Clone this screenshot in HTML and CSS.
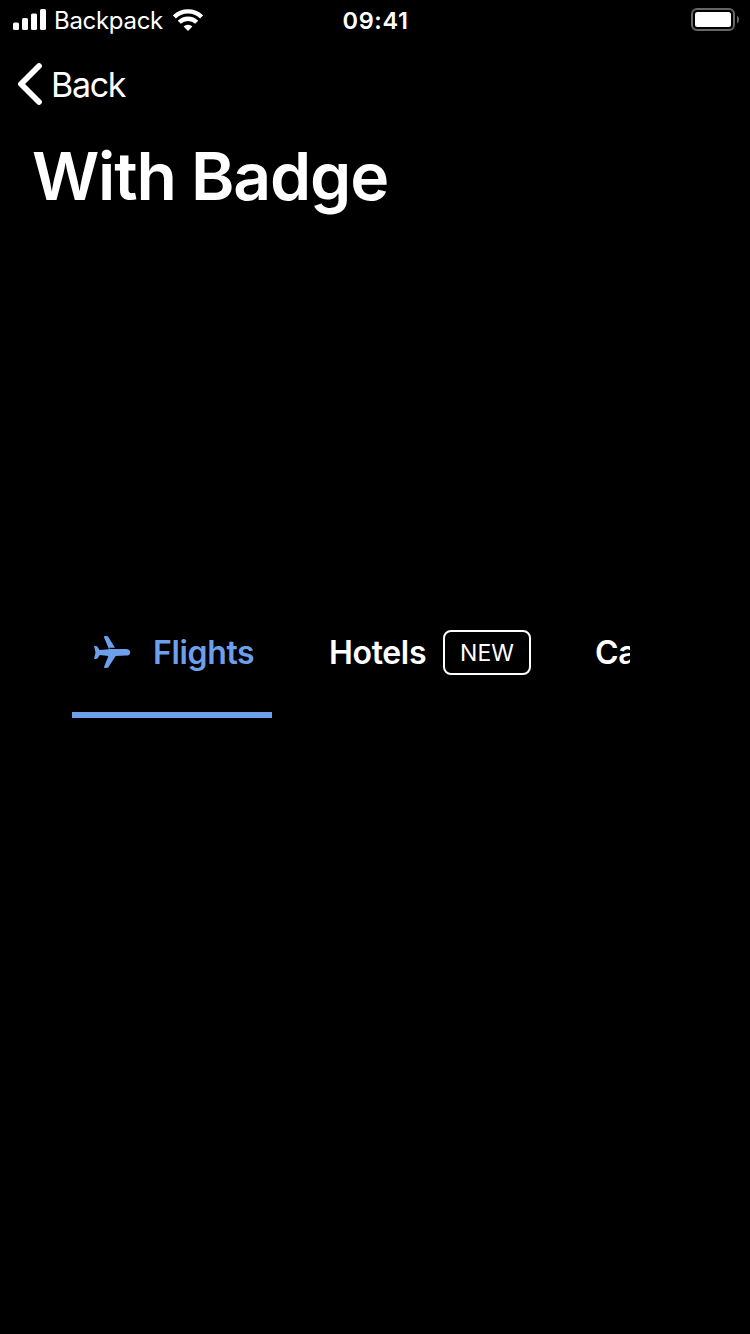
FILE: index.html
```html
<!DOCTYPE html>
<html lang="en">
<head>
<meta charset="utf-8">
<title>With Badge</title>
<link rel="stylesheet" href="styles.css">
</head>
<body>
<header class="status">
  <div class="carrier">
    <svg class="signal" width="34" height="22" viewBox="0 0 34 22" fill="#fff"><rect x="0" y="13.5" width="6" height="7.5" rx="1.5"/><rect x="9" y="9" width="6" height="12" rx="1.5"/><rect x="18" y="4.5" width="6" height="16.5" rx="1.5"/><rect x="27" y="0" width="6" height="21" rx="1.5"/></svg>
    <span class="carrier-name">Backpack</span>
    <svg class="wifi" width="30" height="22" viewBox="0 0 30 22"><g fill="none" stroke="#fff" stroke-width="4.4"><path d="M1.4 7.9a19.6 19.6 0 0 1 27.2 0"/><path d="M6.3 13.3a12.3 12.3 0 0 1 17.4 0"/></g><path d="M10.6 17.5a6.4 6.4 0 0 1 8.8 0L15 22z" fill="#fff"/></svg>
  </div>
  <span class="time">09:41</span>
  <svg class="battery" width="48" height="24" viewBox="0 0 48 24"><rect x="1" y="1" width="42" height="21" rx="5" fill="none" stroke="#666" stroke-width="2"/><rect x="4" y="4" width="36" height="15" rx="2.5" fill="#fff"/><path d="M46 7.5q2 1.2 2 4t-2 4z" fill="#666"/></svg>
</header>
<nav class="nav">
  <svg class="chevron" width="26" height="44" viewBox="0 0 26 44"><path d="M22 4 4 22l18 18" fill="none" stroke="#fff" stroke-width="5.8" stroke-linecap="round" stroke-linejoin="round"/></svg>
  <span class="back">Back</span>
</nav>
<h1 class="title">With Badge</h1>
<main class="tabs">
  <div class="tab tab-selected">
    <svg class="plane" width="38" height="34" viewBox="0 0 38 34"><path fill="#6d9feb" d="M0 10h2.1q.8 0 1.4.8L5.5 14l9.5-.8L10 1.2Q9.6 0 10.8 0h2q1 0 1.6.9L21 11.8h-5.5v1.3H32q4.2.4 4.2 3.3T32 19.6l-10.3.5-7.3 11.1q-.5.8-1.5.8h-2q-1.2 0-.8-1.2l4.3-10.8-8.6-1-2.3 3.3q-.5.7-1.4.7H0l1.5-6.5z"/></svg>
    <span class="label flights">Flights</span>
  </div>
  <div class="tab hotels-tab"><span class="label hotels">Hotels</span><span class="badge">NEW</span></div>
  <div class="tab cars-tab"><span class="label">Cars</span></div>
</main>
</body>
</html>
```
FILE: styles.css
```css
body {
  margin: 0;
  height: 1334px;
  overflow: hidden;
  background: #000;
  color: #fff;
  font-family: Inter, "Liberation Sans", sans-serif;
  white-space: nowrap;
}
svg { display: block; flex: none; }
.status {
  display: grid;
  grid-template-columns: 1fr auto 1fr;
  height: 40px;
  box-sizing: border-box;
  padding: 0 11px 0 13px;
  font-size: 24px;
  line-height: 42px;
}
.carrier { display: flex; }
.signal { margin-top: 9px; }
.carrier-name { width: 111px; margin-left: 7px; letter-spacing: -.3px; }
.wifi { margin-top: 9px; margin-left: 8px; }
.time { margin-right: 1px; font-weight: 600; font-size: 23.5px; letter-spacing: .6px; }
.battery { justify-self: end; margin-top: 8px; }
.nav {
  display: flex;
  align-items: center;
  height: 88px;
  padding-left: 17px;
}
.chevron { margin-right: 8px; }
.back { padding-top: 1px; font-size: 34px; line-height: 40px; letter-spacing: -1.3px; }
.title {
  margin: 0;
  padding: 8px 0 0 32px;
  font-size: 66px;
  line-height: 80px;
  font-weight: 600;
  letter-spacing: -1.2px;
}
.tabs {
  display: flex;
  width: 558px;
  height: 130px;
  margin: 372px 0 0 72px;
  overflow: hidden;
}
.tab {
  display: flex;
  flex: none;
  align-items: center;
  box-sizing: border-box;
  height: 130px;
  padding-bottom: 2px;
}
.tab-selected {
  width: 200px;
  padding: 4px 0 0 22px;
  border-bottom: 6px solid #6d9feb;
  color: #6d9feb;
}
.plane { margin-top: 2px; }
.label { padding-top: 1px; font-size: 32px; line-height: 40px; font-weight: 600; letter-spacing: -.35px; }
.flights { margin-left: 21px; }
.hotels-tab { width: 259px; padding-left: 57px; }
.hotels { width: 114px; }
.badge {
  width: 88px;
  height: 45px;
  box-sizing: border-box;
  border: 2px solid #fff;
  border-radius: 8px;
  font-size: 23px;
  line-height: 42px;
  font-weight: 400;
  text-align: center;
}
.cars-tab { padding-left: 64px; }
```
